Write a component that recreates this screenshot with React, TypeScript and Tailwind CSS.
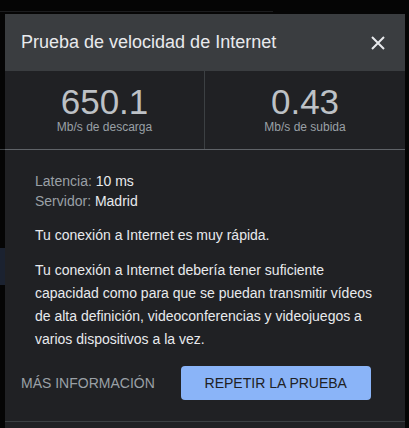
export default function App() {
  return (
    <div
      className="relative w-[409px] h-[428px] overflow-hidden bg-[#050505] pt-[14px] pl-[5px]"
      style={{ fontFamily: '"Liberation Sans", Arial, sans-serif' }}
    >
      {/* bits of the page behind the dialog */}
      <div className="absolute left-0 top-[11px] w-[273px] h-px bg-[#1c1d1f]" />
      <div className="absolute left-0 top-[149px] w-[5px] h-px bg-[#3c4043]" />
      <div className="absolute left-0 top-[248px] w-[5px] h-[37px] bg-[#1b2230]" />

      <div className="w-[400px] bg-[#202124]">
        <div className="h-[57px] bg-[#3a3d40] flex items-center justify-between pl-4 pr-5">
          <h2 className="text-[18px] text-[#e8eaed]">Prueba de velocidad de Internet</h2>
          <svg width="14" height="14" viewBox="0 0 14 14" className="text-[#e8eaed]">
            <path d="M1 1 L13 13 M13 1 L1 13" stroke="currentColor" strokeWidth="2" />
          </svg>
        </div>

        <div className="grid grid-cols-2 h-[79px] border-b border-[#5f6368]">
          <div className="flex flex-col items-center pt-[13px] border-r border-[#3c4043]">
            <span className="text-[35px] leading-[36px] text-[#bdc1c6]">650.1</span>
            <span className="text-[12px] leading-[14px] text-[#9aa0a6]">Mb/s de descarga</span>
          </div>
          <div className="flex flex-col items-center pt-[13px]">
            <span className="text-[35px] leading-[36px] text-[#bdc1c6]">0.43</span>
            <span className="text-[12px] leading-[14px] text-[#9aa0a6]">Mb/s de subida</span>
          </div>
        </div>

        <div className="px-[30px] pt-[21px] text-[14px] text-[#e8eaed]">
          <p className="leading-5">
            <span className="text-[#9aa0a6]">Latencia: </span>10 ms
          </p>
          <p className="leading-5">
            <span className="text-[#9aa0a6]">Servidor: </span>Madrid
          </p>
          <p className="mt-[14px] leading-5">Tu conexión a Internet es muy rápida.</p>
          <p className="mt-[14px] leading-[23px]">
            Tu conexión a Internet debería tener suficiente capacidad como para que se puedan
            transmitir vídeos de alta definición, videoconferencias y videojuegos a varios
            dispositivos a la vez.
          </p>
        </div>

        <div className="flex items-center gap-[26px] pl-4 pt-[15px] pb-[21px]">
          <button className="text-[14px] text-[#9aa0a6] px-0">MÁS INFORMACIÓN</button>
          <button className="w-[190px] h-[34px] rounded-[4px] bg-[#8ab4f8] text-[14px] text-[#202124]">
            REPETIR LA PRUEBA
          </button>
        </div>
        <div className="border-t border-[#3c4043] h-[8px]" />
      </div>
    </div>
  );
}
